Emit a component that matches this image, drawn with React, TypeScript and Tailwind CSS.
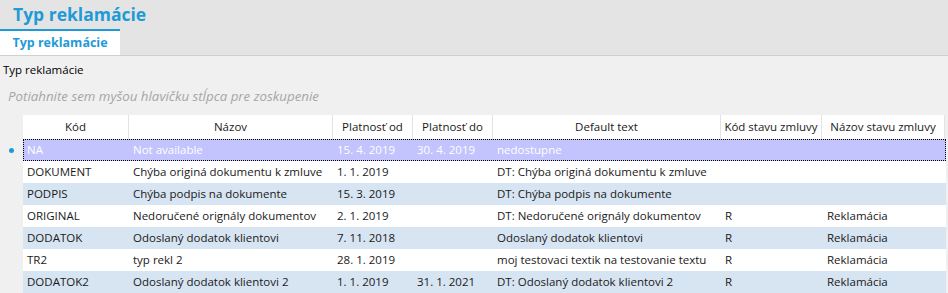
import React from 'react';

const COLS = [
  { label: 'Kód', w: 'w-[106px]' },
  { label: 'Názov', w: 'w-[204px]' },
  { label: 'Platnosť od', w: 'w-[80px]' },
  { label: 'Platnosť do', w: 'w-[80px]' },
  { label: 'Default text', w: 'w-[228px]' },
  { label: 'Kód stavu zmluvy', w: 'w-[101px]' },
  { label: 'Názov stavu zmluvy', w: 'w-[123px]' },
];

const ROWS: string[][] = [
  ['NA', 'Not available', '15. 4. 2019', '30. 4. 2019', 'nedostupne', '', ''],
  ['DOKUMENT', 'Chýba originá dokumentu k zmluve', '1. 1. 2019', '', 'DT: Chýba originá dokumentu k zmluve', '', ''],
  ['PODPIS', 'Chýba podpis na dokumente', '15. 3. 2019', '', 'DT: Chýba podpis na dokumente', '', ''],
  ['ORIGINAL', 'Nedoručené orignály dokumentov', '2. 1. 2019', '', 'DT: Nedoručené orignály dokumentov', 'R', 'Reklamácia'],
  ['DODATOK', 'Odoslaný dodatok klientovi', '7. 11. 2018', '', 'Odoslaný dodatok klientovi', 'R', 'Reklamácia'],
  ['TR2', 'typ rekl 2', '28. 1. 2019', '', 'moj testovaci textik na testovanie textu', 'R', 'Reklamácia'],
  ['DODATOK2', 'Odoslaný dodatok klientovi 2', '1. 1. 2019', '31. 1. 2021', 'DT: Odoslaný dodatok klientovi 2', 'R', 'Reklamácia'],
];

const font = { fontFamily: '"Open Sans", "Noto Sans", sans-serif' };

export default function App() {
  return (
    <div className="w-[948px] h-[293px] overflow-hidden bg-[#f0f0f0] text-[#1a1a1a]" style={font}>
      {/* header band */}
      <div className="bg-[#e4e4e4] border-b border-[#d0d0d0]">
        <div className="h-[29px] pl-[13px] pt-[1px] text-[17.5px] font-bold leading-[26px] text-[#1e9bd7]">
          Typ reklamácie
        </div>
        <div className="flex h-[26px]">
          <div className="w-[120px] bg-white border-t-2 border-[#1e9bd7] flex items-center justify-center text-[12.5px] font-bold text-[#1e9bd7]">
            Typ reklamácie
          </div>
        </div>
      </div>

      <div className="pl-[3px] pt-[5px] h-[24px] text-[11.5px] leading-[17px] text-black">Typ reklamácie</div>
      <div className="pl-[8px] h-[35px] pt-[7px] text-[13.3px] italic text-[#a6a6a6] leading-[18px]">
        Potiahnite sem myšou hlavičku stĺpca pre zoskupenie
      </div>

      {/* grid */}
      <div className="text-[11.5px]">
        <div className="flex h-[24px]">
          <div className="w-[23px]" />
          {COLS.map((c) => (
            <div
              key={c.label}
              className={`${c.w} bg-white border-r border-[#e3e3e3] flex items-center justify-center whitespace-nowrap overflow-hidden`}
            >
              {c.label}
            </div>
          ))}
        </div>
        {ROWS.map((r, i) => {
          const selected = i === 0;
          const bg = selected ? 'bg-[#c3c3fd] text-white' : i % 2 === 0 ? 'bg-[#d7e4f2]' : 'bg-white';
          return (
            <div key={r[0]} className="flex h-[22px]">
              <div className="w-[23px] flex items-center justify-center">
                {selected && <div className="w-[5px] h-[5px] rounded-full bg-[#1e9bd7]" />}
              </div>
              <div className={`flex w-[923px] ${bg} ${selected ? 'border border-dotted border-black' : ''}`}>
                {COLS.map((c, j) => (
                  <div
                    key={c.label}
                    className={`${c.w} ${j === 6 ? 'pl-[5px]' : 'pl-[4px]'} flex items-center whitespace-nowrap overflow-hidden ${selected && j === 0 ? '-ml-px' : ''}`}
                  >
                    {r[j]}
                  </div>
                ))}
              </div>
            </div>
          );
        })}
      </div>
    </div>
  );
}
